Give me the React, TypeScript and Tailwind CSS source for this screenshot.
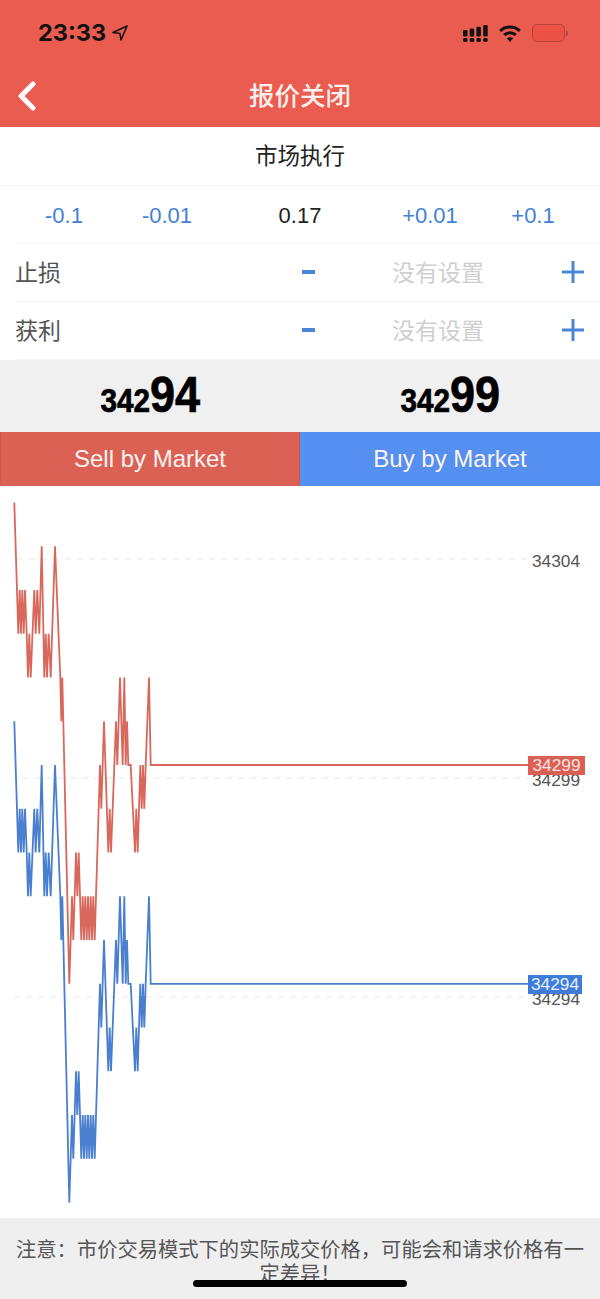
const font = "font-['Liberation_Sans','Noto_Sans_CJK_SC',sans-serif]";

// [x in 3x crop units, price level]; one level is 43.75px, blue line sits 5 levels lower
const ticks: [number, number][] = [
  [43, 0], [55, 3], [59, 2], [63, 3], [67, 2], [71, 3], [75, 2], [80, 3], [84, 4], [88, 3], [92, 4],
  [103, 2], [107, 3], [112, 2], [118, 3], [125, 1], [133, 4], [137, 3], [141, 4], [146, 3], [152, 4],
  [165, 1], [181, 4], [184, 5], [187, 4], [208, 11], [216, 9], [220, 10], [228, 8], [232, 9],
  [236, 8], [244, 10], [248, 9], [252, 10], [256, 9], [260, 10], [264, 9], [268, 10], [272, 9], [276, 10],
  [280, 9], [284, 10], [300, 6], [304, 7], [312, 5], [325, 8], [329, 7], [333, 8], [348, 5], [352, 6],
  [360, 4], [368, 6], [373, 4], [377, 6], [381, 5], [385, 6], [392, 6], [405, 8], [409, 7], [413, 8],
  [421, 6], [425, 7], [429, 6], [433, 7], [437, 6], [447, 4], [452, 6],
];

const toPoints = (shift: number, endX: number) =>
  ticks.map(([x, l]) => `${(x / 3).toFixed(1)},${(16.5 + (l + shift) * 43.75).toFixed(1)}`).join(" ") +
  ` ${endX},${(16.5 + (6 + shift) * 43.75).toFixed(1)}`;

const Chart = () => {
  return (
    <div className="relative h-[732px] bg-white">
      <svg width="600" height="732" className="block">
        <line x1="17" y1="73" x2="530" y2="73" stroke="#e8e8e8" strokeDasharray="6 6" />
        <line x1="22" y1="292" x2="530" y2="292" stroke="#e8e8e8" strokeDasharray="6 6" />
        <line x1="14" y1="511" x2="530" y2="511" stroke="#e8e8e8" strokeDasharray="6 6" />
        <polyline points={toPoints(0, 530)} fill="none" stroke="#d9685c" strokeWidth="1.8" />
        <polyline points={toPoints(5, 530)} fill="none" stroke="#4a7fd0" strokeWidth="1.8" />
      </svg>
      <span className="absolute left-[532px] top-[65px] text-[17.3px] leading-5 text-[#555]">34304</span>
      <span className="absolute left-[532px] top-[284px] text-[17.3px] leading-5 text-[#555]">34299</span>
      <span className="absolute left-[532px] top-[503px] text-[17.3px] leading-5 text-[#555]">34294</span>
      <span className="absolute left-[528px] top-[270px] flex h-[19px] w-[57px] items-center justify-center bg-[#dc5f53] text-[17.3px] text-[#fde4e0]">
        34299
      </span>
      <span className="absolute left-[528px] top-[489px] flex h-[19px] w-[54px] items-center justify-center bg-[#3f7cd9] text-[17.3px] text-[#e6f0ff]">
        34294
      </span>
    </div>
  );
};

const StatusBar = () => {
  return (
    <div className="flex h-[66px] items-start justify-between pl-[38px] pr-[32px] pt-[19px]">
      <div className="flex items-center gap-[6px]">
        <span className="font-['Inter',sans-serif] text-[23.5px] font-bold leading-7 text-[#111]">23:33</span>
        <svg width="16" height="16" viewBox="0 0 16 16" fill="none" stroke="#111" strokeWidth="1.6" strokeLinejoin="round">
          <path d="M15 1 L1 7.5 L8 8.5 L9 15 Z" />
        </svg>
      </div>
      <div className="flex items-center gap-[11px] pt-[5px]">
        <svg width="25" height="17" viewBox="0 0 25 17" fill="#111">
          <rect x="0" y="5" width="4.5" height="6.5" rx="1.2" />
          <rect x="0" y="13" width="4.5" height="4" rx="1.4" />
          <rect x="6.7" y="3.5" width="4.5" height="8" rx="1.2" />
          <rect x="6.7" y="13" width="4.5" height="4" rx="1.4" />
          <rect x="13.4" y="1.7" width="4.5" height="9.8" rx="1.2" />
          <rect x="13.4" y="13" width="4.5" height="4" rx="1.4" />
          <rect x="20.2" y="0" width="4.5" height="11.5" rx="1.2" />
          <rect x="20.2" y="13" width="4.5" height="4" rx="1.4" />
        </svg>
        <svg width="22" height="17" viewBox="0 0 22 17" fill="none" stroke="#111" strokeWidth="3">
          <path d="M1.2 6 C6.5 0.8 15.5 0.8 20.8 6" />
          <path d="M5.2 10 C8.5 7 13.5 7 16.8 10" />
          <path d="M11 17 L7.8 13.2 C9.6 12 12.4 12 14.2 13.2 Z" fill="#111" stroke="none" />
        </svg>
        <div className="flex items-center">
          <div className="h-[18px] w-[33px] rounded-[5px] border border-[#b5443a] bg-[#ec5246]" />
          <div className="ml-px h-[5px] w-[2px] rounded-r-sm bg-[#b5443a]" />
        </div>
      </div>
    </div>
  );
};

const Sltp = ({ label }: { label: string }) => {
  return (
    <div className="ml-[15px] grid h-[58px] grid-cols-[273px_40px_220px_1fr] items-center border-b border-[#f3f3f3]">
      <span className="pt-px text-[23px] text-[#555]">{label}</span>
      <div className="flex justify-center">
        <div className="mb-[2px] h-[4px] w-[13px] bg-[#4a86d8]" />
      </div>
      <span className="pt-px text-center text-[23px] text-[#cfcfcf]">没有设置</span>
      <svg width="22" height="22" viewBox="0 0 22 22" className="ml-[14px] mb-[2px]" stroke="#4a86d8" strokeWidth="3">
        <path d="M0 11 H22 M11 0 V22" />
      </svg>
    </div>
  );
};

const Price = ({ small, big }: { small: string; big: string }) => {
  return (
    <div className="flex items-baseline justify-center text-black">
      <div className="flex origin-center scale-x-[0.9] items-baseline font-bold [-webkit-text-stroke:0.7px_black]">
        <span className="text-[33px] leading-none">{small}</span>
        <span className="text-[50px] leading-none">{big}</span>
      </div>
    </div>
  );
};

export default function App() {
  return (
    <div className={`${font} flex h-[1299px] w-[600px] flex-col overflow-hidden bg-white`}>
      <div className="h-[127px] bg-[#ea5c50]">
        <StatusBar />
        <div className="relative flex h-[61px] items-center justify-center pb-[2px]">
          <svg width="20" height="30" viewBox="0 0 20 30" fill="none" stroke="white" strokeWidth="5" strokeLinecap="round" strokeLinejoin="round" className="absolute left-[17px] top-[15px]">
            <path d="M16 3 L4 15 L16 27" />
          </svg>
          <span className="text-[25.5px] font-medium leading-8 text-[#fdf1ef]">报价关闭</span>
        </div>
      </div>

      <div className="flex h-[59px] items-center justify-center border-b border-[#f5f5f5] pt-[2px] text-[22.5px] text-[#222]">
        市场执行
      </div>

      <div className="ml-[15px] grid h-[58px] grid-cols-[98px_108px_158px_102px_104px] items-center border-b border-[#f3f3f3] pt-[2px] text-center text-[22px] text-[#4480d6]">
        <span>-0.1</span>
        <span>-0.01</span>
        <span className="text-[#222]">0.17</span>
        <span>+0.01</span>
        <span>+0.1</span>
      </div>

      <Sltp label="止损" />
      <Sltp label="获利" />

      <div className="grid h-[72px] grid-cols-2 items-center bg-[#f0f0f0] pb-[2px]">
        <Price small="342" big="94" />
        <Price small="342" big="99" />
      </div>

      <div className="grid h-[54px] grid-cols-2 text-[24px] text-[#fbf3f1]">
        <div className="flex items-center justify-center border-x border-[#c9574c] bg-[#dc6155]">Sell by Market</div>
        <div className="flex items-center justify-center bg-[#5590f0]">Buy by Market</div>
      </div>

      <Chart />

      <div className="relative flex-1 bg-[#efeff0] px-[15px] pt-[20px] text-center text-[20.3px] leading-[24px] text-[#555]">
        注意：市价交易模式下的实际成交价格，可能会和请求价格有一定差异！
        <div className="absolute bottom-[12px] left-[193px] h-[7px] w-[214px] rounded-full bg-black" />
      </div>
    </div>
  );
}
